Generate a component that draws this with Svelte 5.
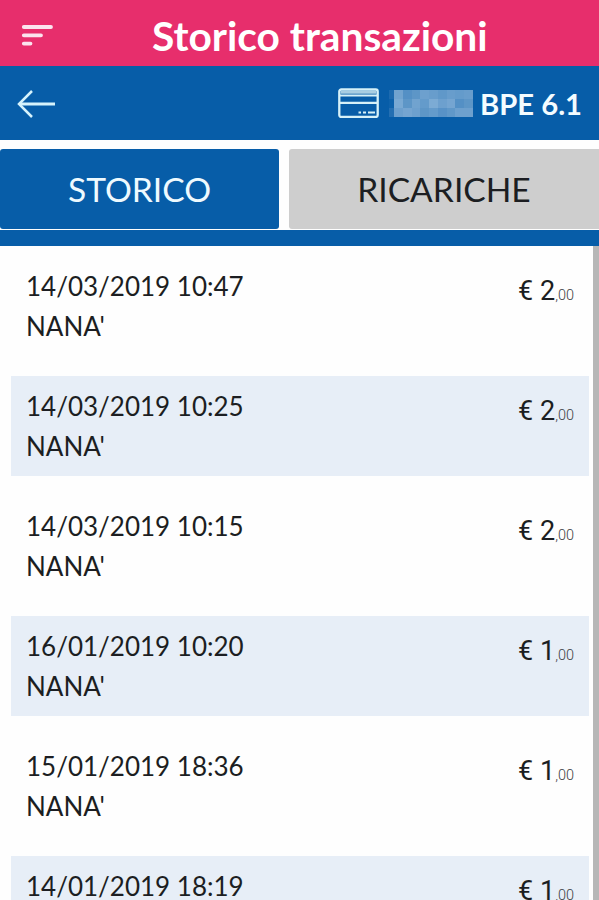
<script>
	const transactions = [
		{ date: '14/03/2019 10:47', place: "NANA'", amount: 2 },
		{ date: '14/03/2019 10:25', place: "NANA'", amount: 2 },
		{ date: '14/03/2019 10:15', place: "NANA'", amount: 2 },
		{ date: '16/01/2019 10:20', place: "NANA'", amount: 1 },
		{ date: '15/01/2019 18:36', place: "NANA'", amount: 1 },
		{ date: '14/01/2019 18:19', amount: 1 }
	];

	// Opacity of each cell of the masked card number
	const mask = [
		[0.1, 0.52, 0.38, 0.42, 0.5, 0.48, 0.44, 0.48, 0.46, 0.48],
		[0.04, 0.56, 0.42, 0.52, 0.46, 0.58, 0.5, 0.54, 0.38, 0.42],
		[0.14, 0.5, 0.54, 0.5, 0.42, 0.46, 0.4, 0.44, 0.5, 0.5]
	];

	let tab = $state('storico');
</script>

<div class="app">
	<header class="title-bar">
		<svg class="menu" viewBox="0 0 34 23" fill="none" stroke="#fbe3ee" stroke-width="3.8" stroke-linecap="round">
			<path d="M3.8 3H31M3.8 11.3H21M3.8 19.6H10.5" />
		</svg>
		<h1>Storico transazioni</h1>
	</header>

	<div class="card-bar">
		<svg class="back" viewBox="0 0 38 28" fill="none" stroke="#d6f3fc">
			<path d="M15 1L2 14L15 27" stroke-width="2.5" />
			<path d="M2 14H38" stroke-width="3" />
		</svg>
		<div class="card">
			<svg class="card-icon" viewBox="0 0 42 30" fill="none" stroke="#d6f1f8">
				<rect x="1.3" y="1.5" width="38.4" height="27.5" rx="2" stroke-width="2.3" />
				<path d="M2.5 4.2H38.5" stroke="#a9cee2" stroke-width="3" />
				<path d="M1 7.5H40M1 14.8H40" stroke-width="2.2" />
				<path d="M20.5 24.5H23M25 24.5H28M30 24.5H37" stroke-width="2" />
			</svg>
			<div class="mask">
				{#each mask as row}
					{#each row as opacity}
						<span style="opacity: {opacity};"></span>
					{/each}
				{/each}
			</div>
			<span class="card-name">BPE 6.1</span>
		</div>
	</div>

	<div class="tabs">
		<button class:active={tab === 'storico'} onclick={() => (tab = 'storico')}>STORICO</button>
		<button class="second" class:active={tab === 'ricariche'} onclick={() => (tab = 'ricariche')}>RICARICHE</button>
	</div>
	<div class="divider"></div>

	<div class="list">
		<div class="rows">
			{#each transactions as item}
				<div class="row">
					<div class="info">
						<div class="date">{item.date}</div>
						{#if item.place}
							<div class="place">{item.place}</div>
						{/if}
					</div>
					<div class="amount">€ {item.amount}<small>,00</small></div>
				</div>
			{/each}
		</div>
		<div class="scrollbar"></div>
	</div>
</div>

<style>
	:global(body) {
		background: #fff;
		overflow: hidden;
	}

	.app {
		display: flex;
		flex-direction: column;
		width: 599px;
		height: 900px;
		overflow: hidden;
		background: #fefefe;
		font-family: Lato, 'Liberation Sans', sans-serif;
		color: #1c1e22;
	}

	.title-bar {
		display: flex;
		align-items: center;
		flex: none;
		height: 66px;
		padding-left: 20px;
		background: #e72e6c;
		box-sizing: border-box;
	}

	.menu {
		width: 34px;
		height: 23px;
		margin-top: 4px;
	}

	h1 {
		margin: 5px 0 0 98px;
		font-size: 40.7px;
		line-height: 46px;
		font-weight: 700;
		color: #fff;
		white-space: nowrap;
	}

	.card-bar {
		display: flex;
		align-items: center;
		justify-content: space-between;
		flex: none;
		height: 74px;
		padding: 0 17px;
		background: #075da8;
		box-sizing: border-box;
	}

	.back {
		width: 38px;
		height: 28px;
		margin-top: 2px;
	}

	.card {
		display: flex;
		align-items: center;
		height: 74px;
	}

	.card-icon {
		width: 42px;
		height: 30px;
	}

	.mask {
		display: grid;
		grid-template-columns: 5px repeat(9, 1fr);
		grid-template-rows: repeat(3, 1fr);
		width: 84px;
		height: 27px;
		margin-left: 9px;
	}

	.mask span {
		background: #d3e4f4;
	}

	.card-name {
		margin-left: 7px;
		font-size: 29.2px;
		font-weight: 700;
		color: #f4fcff;
		white-space: nowrap;
	}

	.tabs {
		display: grid;
		grid-template-columns: 279px 310px;
		gap: 10px;
		flex: none;
		height: 90px;
		padding: 9px 0 1px;
		box-sizing: border-box;
	}

	.tabs button {
		margin: 0;
		padding: 0;
		border: 0;
		border-radius: 3px;
		background: #cecece;
		color: #1c1e22;
		font: 400 33.6px Lato, 'Liberation Sans', sans-serif;
	}

	.tabs .active {
		background: #075da8;
		color: #eefaff;
	}

	.tabs .second {
		border-radius: 3px 0 0 3px;
	}

	.divider {
		flex: none;
		height: 16px;
		background: #075da8;
	}

	.list {
		display: flex;
		flex: 1;
		min-height: 0;
		overflow: hidden;
	}

	.rows {
		flex: 1;
		padding: 10px 4px 0 11px;
	}

	.row {
		display: flex;
		justify-content: space-between;
		height: 100px;
		margin-bottom: 20px;
		padding: 10px 15px 0;
		box-sizing: border-box;
	}

	.row:nth-child(even) {
		background: #e7eef7;
	}

	.date,
	.place {
		font-size: 26px;
		line-height: 40px;
		white-space: nowrap;
	}

	.amount {
		padding-top: 5px;
		font-family: Roboto, 'Liberation Sans', sans-serif;
		font-size: 27px;
		line-height: 40px;
		white-space: nowrap;
	}

	small {
		font-size: 14.5px;
		font-weight: 300;
		color: #3c3f44;
	}

	.scrollbar {
		width: 6px;
		background: #b7b7b7;
	}
</style>
